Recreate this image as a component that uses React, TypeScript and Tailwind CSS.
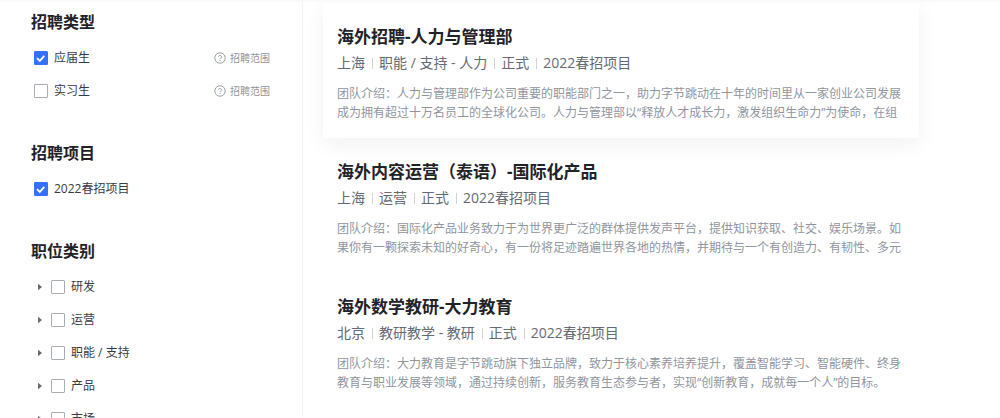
import { useState } from 'react'

interface CheckboxProps {
  id: string
  defaultChecked?: boolean
}

interface TypeOption {
  id: string
  label: string
  checked: boolean
}

interface Job {
  title: string
  tags: string[]
  description: string
}

const jobTypes: TypeOption[] = [
  { id: 'graduate', label: '应届生', checked: true },
  { id: 'intern', label: '实习生', checked: false }
]

const categories = ['研发', '运营', '职能 / 支持', '产品', '市场']

const jobs: Job[] = [
  {
    title: '海外招聘-人力与管理部',
    tags: ['上海', '职能 / 支持 - 人力', '正式', '2022春招项目'],
    description:
      '团队介绍：人力与管理部作为公司重要的职能部门之一，助力字节跳动在十年的时间里从一家创业公司发展成为拥有超过十万名员工的全球化公司。人力与管理部以“释放人才成长力，激发组织生命力”为使命，在组'
  },
  {
    title: '海外内容运营（泰语）-国际化产品',
    tags: ['上海', '运营', '正式', '2022春招项目'],
    description:
      '团队介绍：国际化产品业务致力于为世界更广泛的群体提供发声平台，提供知识获取、社交、娱乐场景。如果你有一颗探索未知的好奇心，有一份将足迹踏遍世界各地的热情，并期待与一个有创造力、有韧性、多元'
  },
  {
    title: '海外数学教研-大力教育',
    tags: ['北京', '教研教学 - 教研', '正式', '2022春招项目'],
    description:
      '团队介绍：大力教育是字节跳动旗下独立品牌，致力于核心素养培养提升，覆盖智能学习、智能硬件、终身教育与职业发展等领域，通过持续创新，服务教育生态参与者，实现“创新教育，成就每一个人”的目标。'
  }
]

const Checkbox = ({ id, defaultChecked = false }: CheckboxProps) => {
  const [checked, setChecked] = useState(defaultChecked)

  return (
    <span className="grid h-[14px] w-[14px] shrink-0">
      <input
        id={id}
        type="checkbox"
        checked={checked}
        onChange={(e) => setChecked(e.target.checked)}
        className="col-start-1 row-start-1 h-[14px] w-[14px] appearance-none rounded-[1px] border border-[#a8acb3] bg-white checked:border-[#3370ff] checked:bg-[#3370ff]"
      />
      {checked && (
        <svg viewBox="0 0 14 14" className="pointer-events-none col-start-1 row-start-1 h-[14px] w-[14px]" fill="none">
          <path d="M3 7.1 5.8 9.9 10.3 4.9" stroke="#fff" strokeWidth="1.8" />
        </svg>
      )}
    </span>
  )
}

const ScopeButton = () => (
  <button type="button" className="flex items-center gap-1 text-[10px] leading-4 text-[#8f959e]">
    <svg viewBox="0 0 12 12" className="h-3 w-3" fill="none" stroke="currentColor">
      <circle cx="6" cy="6" r="5.2" strokeWidth="0.9" />
      <path d="M4.5 4.9a1.5 1.5 0 1 1 2.3 1.25c-.5.3-.8.5-.8 1" strokeWidth="0.9" />
      <path d="M6 8v1" strokeWidth="1" />
    </svg>
    招聘范围
  </button>
)

const Heading = ({ children }: { children: string }) => (
  <h2 className="mb-[7px] text-base leading-6 font-bold text-[#1f2329]">{children}</h2>
)

const Sidebar = () => (
  <aside className="flex w-[303px] shrink-0 flex-col gap-[34px] border-r border-[#f4f4f5] pt-[10px] pr-8 pl-[31px] text-xs text-[#373c43]">
    <section>
      <Heading>招聘类型</Heading>
      {jobTypes.map((type) => (
        <div key={type.id} className="flex h-[33px] items-center pl-[3px]">
          <Checkbox id={type.id} defaultChecked={type.checked} />
          <label htmlFor={type.id} className="grow pl-[6px]">{type.label}</label>
          <ScopeButton />
        </div>
      ))}
    </section>

    <section>
      <Heading>招聘项目</Heading>
      <div className="flex h-[33px] items-center pl-[3px]">
        <Checkbox id="spring" defaultChecked />
        <label htmlFor="spring" className="pl-[6px]">2022春招项目</label>
      </div>
    </section>

    <section>
      <Heading>职位类别</Heading>
      {categories.map((name, i) => (
        <div key={name} className="flex h-[33px] items-center pl-[6px]">
          <button type="button" aria-label={name} className="w-[14px]">
            <svg viewBox="0 0 6 8" className="h-2 w-[6px]">
              <path d="M1 .8 5 4 1 7.2z" fill="#646a73" />
            </svg>
          </button>
          <Checkbox id={`category-${i}`} />
          <label htmlFor={`category-${i}`} className="pl-[6px]">{name}</label>
        </div>
      ))}
    </section>
  </aside>
)

const JobCard = ({ job, active }: { job: Job; active: boolean }) => (
  <article className={`px-[14px] pt-[22px] pb-4 ${active ? 'bg-white shadow-[0_6px_20px_rgba(31,35,41,0.06)]' : ''}`}>
    <h3 className="text-[17px] leading-6 font-bold text-[#1f2329]">{job.title}</h3>
    <ul className="mt-[3px] flex items-center text-sm leading-[22px] text-[#646a73]">
      {job.tags.map((tag, i) => (
        <li key={tag} className="flex items-center">
          {i > 0 && <span className="mr-[6px] ml-[7px] h-[11px] w-px bg-[#d0d3d6]" />}
          {tag}
        </li>
      ))}
    </ul>
    <p className="mt-[10px] max-h-[38px] overflow-hidden text-xs leading-[19px] text-[#8f959e]">{job.description}</p>
  </article>
)

const App = () => {
  return (
    <div className="flex h-screen overflow-hidden bg-white font-['Open_Sans','Noto_Sans_CJK_SC',sans-serif]">
      <Sidebar />
      <main className="min-w-0 grow pt-[3px] pr-5 pl-5">
        <div className="max-w-[596px]">
          {jobs.map((job, i) => (
            <JobCard key={job.title} job={job} active={i === 0} />
          ))}
        </div>
      </main>
      <div className="pointer-events-none absolute inset-x-0 top-0 h-[3px] bg-linear-to-b from-[#f7f7f8] to-transparent" />
    </div>
  )
}

export default App
